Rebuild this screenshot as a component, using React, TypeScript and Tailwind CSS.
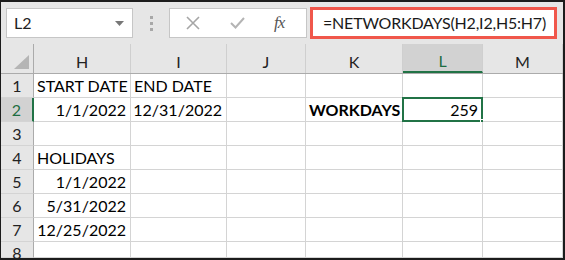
import React from "react";

const COLS = [
  { key: "H", w: "w-[97px]" },
  { key: "I", w: "w-[96px]" },
  { key: "J", w: "w-[79px]" },
  { key: "K", w: "w-[97px]" },
  { key: "L", w: "w-[80px]" },
  { key: "M", w: "w-[80px]" },
];

type Cell = { text: string; align?: "left" | "right"; bold?: boolean };

const DATA: Record<number, Record<string, Cell>> = {
  1: { H: { text: "START DATE" }, I: { text: "END DATE" } },
  2: {
    H: { text: "1/1/2022", align: "right" },
    I: { text: "12/31/2022", align: "right" },
    K: { text: "WORKDAYS", bold: true },
    L: { text: "259", align: "right" },
  },
  4: { H: { text: "HOLIDAYS" } },
  5: { H: { text: "1/1/2022", align: "right" } },
  6: { H: { text: "5/31/2022", align: "right" } },
  7: { H: { text: "12/25/2022", align: "right" } },
};

const ROWS = [1, 2, 3, 4, 5, 6, 7, 8];

function Toolbar() {
  return (
    <div className="h-[42px] flex items-center bg-[#e6e6e6]">
      <div className="ml-[5px] w-[127px] h-[30px] bg-white border border-[#c6c6c6] flex items-center justify-between pl-[7px] pr-[8px]">
        <span className="text-[16px] text-[#222]">L2</span>
        <svg width="9" height="5" viewBox="0 0 9 5">
          <path d="M0 0 H9 L4.5 5 Z" fill="#777" />
        </svg>
      </div>
      <div className="ml-[17px] flex flex-col gap-[3px]">
        <span className="w-[3px] h-[3px] bg-[#a8a8a8]" />
        <span className="w-[3px] h-[3px] bg-[#a8a8a8]" />
        <span className="w-[3px] h-[3px] bg-[#a8a8a8]" />
      </div>
      <div className="ml-[16px] w-[138px] h-[30px] bg-white border border-[#c6c6c6] flex items-center">
        <svg className="ml-[16px]" width="14" height="14" viewBox="0 0 14 14">
          <path d="M1 1 L13 13 M13 1 L1 13" stroke="#a6a6a6" strokeWidth="1.6" fill="none" />
        </svg>
        <svg className="ml-[30px]" width="15" height="12" viewBox="0 0 15 12">
          <path d="M1 6 L5.5 10.5 L14 1" stroke="#b4b4b4" strokeWidth="2" fill="none" />
        </svg>
        <span className="ml-[29px] text-[17px] italic text-[#555] font-['Liberation_Serif',serif] tracking-[-1px]">
          fx
        </span>
      </div>
      <div className="ml-[3px] w-[247px] h-[32px] bg-white border-[3px] border-[#f0574b] flex items-center pl-[10px]">
        <span className="text-[16px] text-[#1a1a1a] tracking-[-0.2px] whitespace-nowrap">=NETWORKDAYS(H2,I2,H5:H7)</span>
      </div>
    </div>
  );
}

function HeaderRow() {
  return (
    <div className="flex h-[30px] bg-[#e6e6e6] border-b border-[#ababab]">
      <div className="w-[33px] shrink-0 border-r border-[#ababab] relative">
        <svg className="absolute right-[4px] bottom-[4px]" width="15" height="14" viewBox="0 0 15 14">
          <path d="M15 0 V14 H0 Z" fill="#b5b5b5" />
        </svg>
      </div>
      {COLS.map((c) => {
        const sel = c.key === "L";
        return (
          <div
            key={c.key}
            className={`${c.w} shrink-0 flex items-center justify-center pt-[6px] text-[16px] border-r border-[#cfcfcf] ${
              sel ? "bg-[#d2d2d2] text-[#1e6e42] border-b-2 border-b-[#217346]" : "text-[#222]"
            }`}
          >
            {c.key}
          </div>
        );
      })}
    </div>
  );
}

function Row({ n }: { n: number }) {
  const sel = n === 2;
  const last = n === 8;
  return (
    <div className={`flex ${last ? "h-[16px]" : "h-[24px]"}`}>
      <div
        className={`w-[33px] shrink-0 flex justify-center text-[16px] leading-[18px] border-b border-[#d4d4d4] ${
          last ? "items-start pt-[2px]" : "items-center"
        } ${
          sel
            ? "bg-[#d2d2d2] text-[#1e6e42] border-r-2 border-r-[#217346]"
            : "bg-[#e6e6e6] text-[#222] border-r border-r-[#ababab]"
        }`}
      >
        {n}
      </div>
      {COLS.map((c) => {
        const cell = DATA[n]?.[c.key];
        const active = n === 2 && c.key === "L";
        return (
          <div
            key={c.key}
            className={`${c.w} shrink-0 bg-white border-r border-b border-[#d4d4d4] relative flex items-center text-[16px] text-black ${
              cell?.align === "right" ? "justify-end pr-[4px]" : "justify-start pl-[3px]"
            } ${cell?.bold ? "font-bold" : ""} whitespace-nowrap`}
          >
            {cell?.text}
            {active && (
              <>
                <div className="absolute left-[-1px] top-[-1px] right-[-1px] bottom-[-1px] border-2 border-[#217346]" />
                <div className="absolute right-[-4px] bottom-[-4px] w-[6px] h-[6px] bg-[#217346] border border-white" />
              </>
            )}
          </div>
        );
      })}
    </div>
  );
}

export default function App() {
  return (
    <div className="w-[565px] h-[260px] overflow-hidden border-t-2 border-r-2 border-b-2 border-l border-[#1c1c1c] bg-white font-['Lato',sans-serif]">
      <Toolbar />
      <HeaderRow />
      {ROWS.map((n) => (
        <Row key={n} n={n} />
      ))}
    </div>
  );
}
